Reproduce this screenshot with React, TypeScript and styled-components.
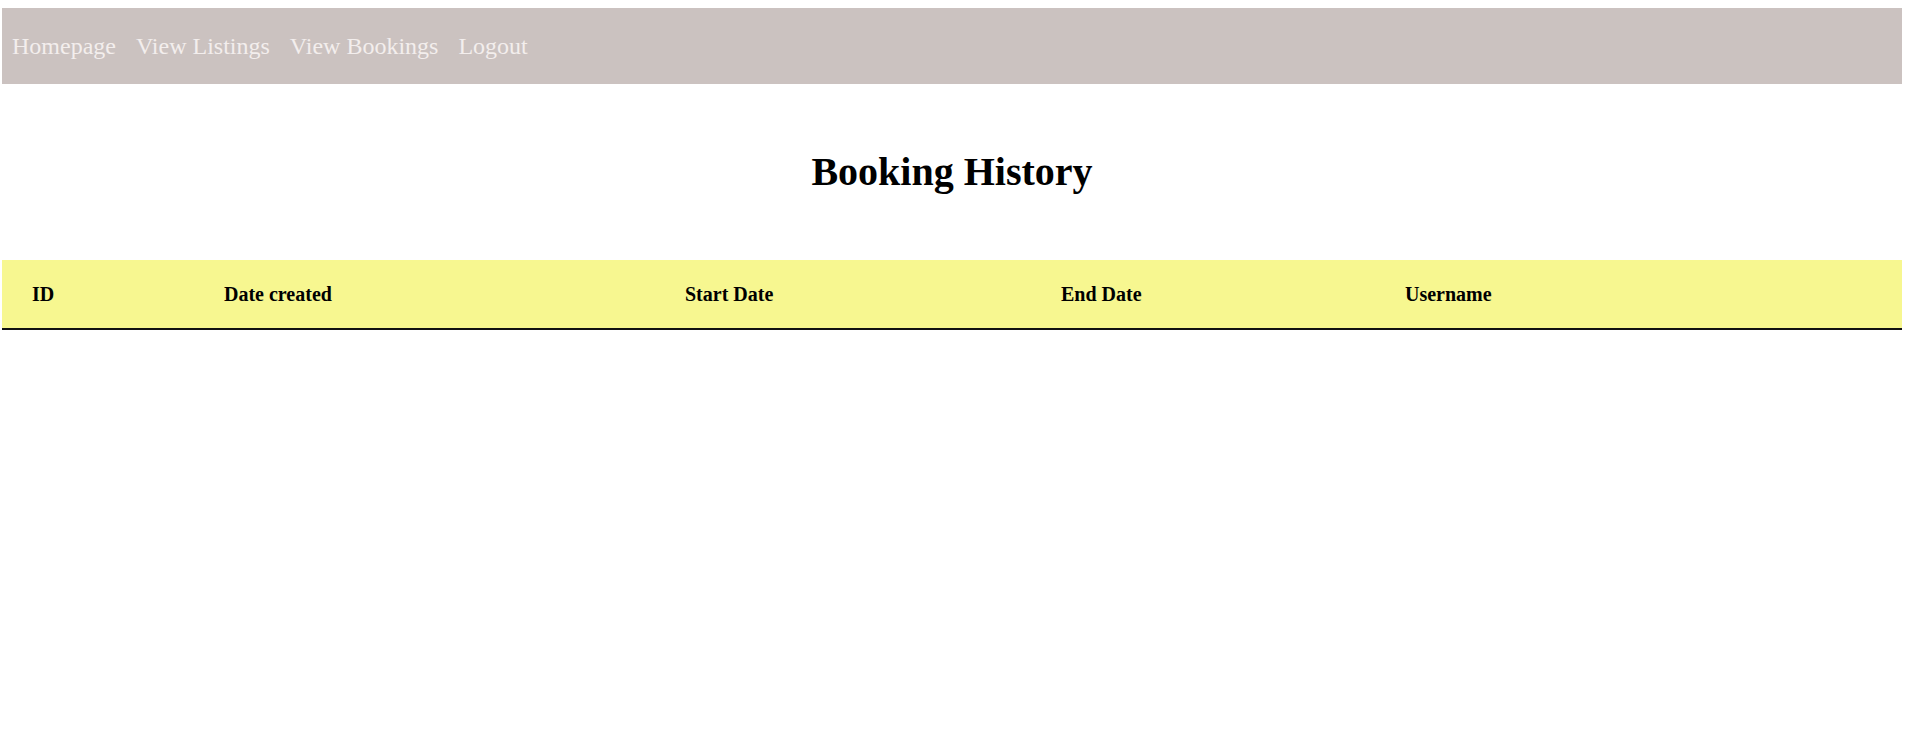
import React from "react";
import styled, { createGlobalStyle } from "styled-components";

const GlobalStyle = createGlobalStyle`
  html, body {
    margin: 0;
    padding: 0;
    background: #ffffff;
    font-family: "Liberation Serif", "Times New Roman", serif;
  }
`;

const Page = styled.div`
  padding: 8px 10px 0 2px;
`;

const NavBar = styled.nav`
  display: flex;
  align-items: center;
  height: 76px;
  padding-top: 1px;
  box-sizing: border-box;
  background: #cbc2c0;
`;

const NavLink = styled.a`
  padding: 0 10px;
  font-size: 24px;
  color: #f3eeed;
  text-decoration: none;
  cursor: pointer;
`;

const Title = styled.h1`
  margin: 0;
  padding: 65px 0 65px;
  text-align: center;
  font-size: 40px;
  font-weight: bold;
  line-height: 46px;
  color: #000;
`;

const Table = styled.div`
  display: flex;
  flex-direction: column;
`;

const HeaderRow = styled.div`
  display: grid;
  grid-template-columns: 192px 461px 376px 344px 1fr;
  align-items: center;
  height: 68px;
  padding-left: 30px;
  background: #f7f790;
  border-bottom: 2px solid #111;
`;

const HeaderCell = styled.div`
  font-size: 20px;
  font-weight: bold;
  color: #000;
`;

const columns = ["ID", "Date created", "Start Date", "End Date", "Username"];
const links = ["Homepage", "View Listings", "View Bookings", "Logout"];

export default function App() {
  return (
    <>
      <GlobalStyle />
      <Page>
        <NavBar>
          {links.map((l) => (
            <NavLink key={l}>{l}</NavLink>
          ))}
        </NavBar>
        <Title>Booking History</Title>
        <Table>
          <HeaderRow>
            {columns.map((c) => (
              <HeaderCell key={c}>{c}</HeaderCell>
            ))}
          </HeaderRow>
        </Table>
      </Page>
    </>
  );
}
